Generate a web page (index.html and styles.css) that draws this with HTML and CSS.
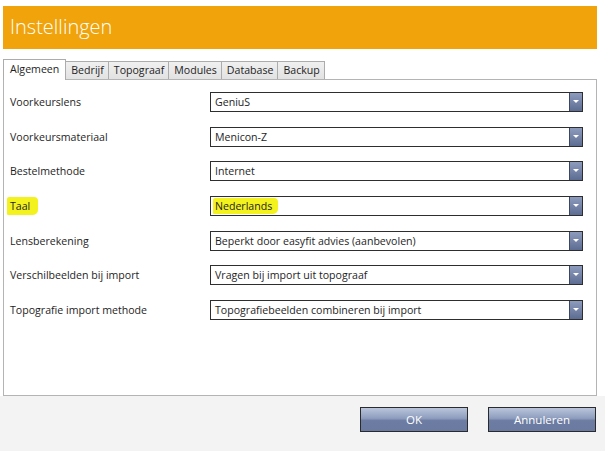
FILE: index.html
```html
<!DOCTYPE html>
<html>
<head>
<meta charset="utf-8">
<link rel="stylesheet" href="styles.css">
</head>
<body>
<div class="window">
  <div class="titlebar">Instellingen</div>
  <div class="tabstrip">
    <div class="tab active">Algemeen</div>
    <div class="tab">Bedrijf</div>
    <div class="tab">Topograaf</div>
    <div class="tab">Modules</div>
    <div class="tab">Database</div>
    <div class="tab">Backup</div>
  </div>
  <div class="panel">
    <div class="row"><span class="label">Voorkeurslens</span><div class="select"><span class="value">GeniuS</span><span class="arrow"></span></div></div>
    <div class="row"><span class="label">Voorkeursmateriaal</span><div class="select"><span class="value">Menicon-Z</span><span class="arrow"></span></div></div>
    <div class="row"><span class="label">Bestelmethode</span><div class="select"><span class="value">Internet</span><span class="arrow"></span></div></div>
    <div class="row"><span class="label"><span class="hl hl-taal">Taal</span></span><div class="select"><span class="value"><span class="hl hl-ned">Nederlands</span></span><span class="arrow"></span></div></div>
    <div class="row"><span class="label">Lensberekening</span><div class="select"><span class="value">Beperkt door easyfit advies (aanbevolen)</span><span class="arrow"></span></div></div>
    <div class="row"><span class="label">Verschilbeelden bij import</span><div class="select"><span class="value">Vragen bij import uit topograaf</span><span class="arrow"></span></div></div>
    <div class="row"><span class="label">Topografie import methode</span><div class="select"><span class="value">Topografiebeelden combineren bij import</span><span class="arrow"></span></div></div>
  </div>
  <div class="footer">
    <div class="btn">OK</div>
    <div class="btn">Annuleren</div>
  </div>
</div>
</body>
</html>
```
FILE: styles.css
```css
html, body {
  margin: 0;
  padding: 0;
  background: #ffffff;
}
.window {
  width: 605px;
  height: 451px;
  display: flex;
  flex-direction: column;
  font-family: "Open Sans", "Noto Sans", sans-serif;
  font-size: 10.6px;
  color: #1e1e1e;
}
.titlebar {
  margin: 6px 8px 0 3px;
  height: 43px;
  background: #f0a30a;
  color: #ffffff;
  font-size: 20px;
  font-weight: 300;
  padding-left: 7px;
  line-height: 42px;
  box-sizing: border-box;
}
.tabstrip {
  margin: 10px 0 0 3px;
  height: 20px;
  display: flex;
  align-items: flex-end;
  position: relative;
  z-index: 1;
}
.tab {
  height: 18px;
  line-height: 17px;
  padding: 0 4px 0 5px;
  border: 1px solid #acacac;
  border-bottom: none;
  border-left: none;
  background: linear-gradient(#f0f0f0, #e2e2e2);
  box-sizing: border-box;
  white-space: nowrap;
}
.tab.active {
  height: 21px;
  line-height: 19px;
  background: #ffffff;
  border-left: 1px solid #acacac;
  padding: 0 6px 0 6px;
  margin-bottom: -1px;
}
.panel {
  margin: 0 8px 0 3px;
  height: 317px;
  border: 1px solid #b4b4b4;
  box-sizing: border-box;
  background: #ffffff;
  padding: 12px 0 0 6px;
  display: flex;
  flex-direction: column;
  gap: 14.67px;
}
.row {
  display: grid;
  grid-template-columns: 200px 373px;
  align-items: center;
  height: 20px;
}
.label {
  white-space: nowrap;
}
.select {
  height: 20px;
  border: 1px solid #2e2e2e;
  box-sizing: border-box;
  display: flex;
  align-items: center;
  background: #ffffff;
}
.value {
  flex: 1;
  padding-left: 4px;
  white-space: nowrap;
}
.arrow {
  width: 12px;
  height: 18px;
  background: linear-gradient(#8d9cbd, #5d6c92);
  border-left: 1px solid #3c4660;
  position: relative;
}
.arrow::after {
  content: "";
  position: absolute;
  left: 3px;
  top: 7px;
  border-left: 3px solid transparent;
  border-right: 3px solid transparent;
  border-top: 3px solid #ffffff;
}
.hl {
  background: #f4f21e;
  border-radius: 2px 4px 5px 1px;
}
.hl-taal {
  padding: 2px 8px 2px 3px;
  margin-left: -3px;
}
.hl-ned {
  padding: 1px 6px 1px 2px;
  margin-left: -2px;
}
.footer {
  flex: 1;
  background: #f3f3f3;
  display: flex;
  justify-content: flex-end;
  align-items: flex-start;
  gap: 20px;
  padding: 11px 9px 0 0;
}
.btn {
  width: 108px;
  height: 25px;
  box-sizing: border-box;
  border: 1px solid #2b2b2b;
  background: linear-gradient(#bac5db 0%, #8e9dbd 45%, #6c7ca2 55%, #6a7aa0 100%);
  color: #ffffff;
  text-align: center;
  line-height: 23px;
  font-size: 11.5px;
}
```
